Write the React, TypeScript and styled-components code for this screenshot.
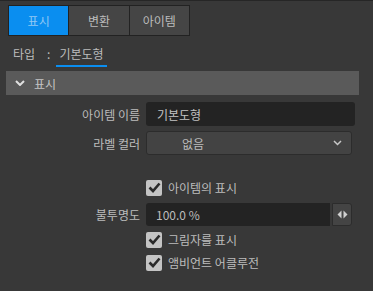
import React from "react";
import styled, { createGlobalStyle } from "styled-components";

const Global = createGlobalStyle`
  html, body { margin: 0; padding: 0; background: #383838; }
  body { font-family: "Noto Sans CJK KR", "Noto Sans", sans-serif; color: #bcbcbc; }
  * { box-sizing: border-box; }
`;

const Panel = styled.div`
  width: 373px;
  height: 291px;
  background: #383838;
  border-top: 1px solid #262626;
  padding: 4px 0 0 8px;
  overflow: hidden;
`;

const Tabs = styled.div`
  display: flex;
  width: 182px;
  height: 31px;
  border: 1px solid #222;
  background: #222;
  gap: 1px;
`;

const Tab = styled.div<{ $active?: boolean }>`
  flex: 1;
  display: flex;
  align-items: center;
  justify-content: center;
  font-size: 12px;
  background: ${(p) => (p.$active ? "#0a8ef0" : "#454545")};
  color: ${(p) => (p.$active ? "#90c8f4" : "#bcbcbc")};
`;

const TypeRow = styled.div`
  display: flex;
  align-items: center;
  height: 30px;
  padding-left: 5px;
  font-size: 12px;
  padding-top: 4px;
`;

const Colon = styled.span`
  margin: 0 6px 0 12px;
`;

const TypeValue = styled.span`
  position: relative;
  padding: 0 3px;
  &::after {
    content: "";
    position: absolute;
    left: 0;
    right: 0;
    bottom: -5px;
    height: 2px;
    background: #0a8ef0;
  }
`;

const SectionHeader = styled.div`
  margin: 5px 0 0 -2px;
  width: 353px;
  height: 24px;
  background: #5a5a5a;
  display: flex;
  align-items: center;
  padding-left: 9px;
  gap: 9px;
  font-size: 12px;
  color: #c4c4c4;
`;

const Rows = styled.div`
  display: flex;
  flex-direction: column;
  padding-top: 7px;
`;

const Row = styled.div<{ $mt?: number }>`
  display: grid;
  grid-template-columns: 132px 1fr;
  column-gap: 6px;
  align-items: center;
  margin-top: ${(p) => p.$mt ?? 0}px;
  font-size: 12px;
`;

const Label = styled.div`
  text-align: right;
`;

const TextInput = styled.div`
  width: 209px;
  height: 24px;
  background: #232323;
  border-radius: 3px;
  display: flex;
  align-items: center;
  padding-left: 11px;
  color: #c4c4c4;
`;

const Select = styled.div`
  width: 206px;
  height: 24px;
  background: #434343;
  border: 1px solid #2c2c2c;
  border-radius: 3px;
  display: flex;
  align-items: center;
  justify-content: space-between;
  padding: 0 9px 0 35px;
`;

const NumberWrap = styled.div`
  display: flex;
  gap: 2px;
  height: 23px;
`;

const NumberInput = styled.div`
  width: 184px;
  background: #232323;
  border-radius: 3px 0 0 3px;
  display: flex;
  align-items: center;
  padding-left: 10px;
  font-size: 12px;
`;

const Spinner = styled.div`
  width: 20px;
  background: #444;
  border: 1px solid #2c2c2c;
  border-radius: 0 3px 3px 0;
  display: flex;
  align-items: center;
  justify-content: center;
`;

const CheckRow = styled.label`
  display: flex;
  align-items: center;
  gap: 6px;
  font-size: 12px;
`;

const Box = styled.span`
  width: 16px;
  height: 16px;
  border-radius: 2px;
  background: #c4c4c4;
  display: flex;
  align-items: center;
  justify-content: center;
`;

const Check = () => (
  <Box>
    <svg width="13" height="11" viewBox="0 0 13 11">
      <path d="M1.5 5.5 L5 9 L11.5 1.5" fill="none" stroke="#2a2a2a" strokeWidth="2.6" />
    </svg>
  </Box>
);

const Chevron = ({ color, size = 10 }: { color: string; size?: number }) => (
  <svg width={size} height={size * 0.6} viewBox="0 0 10 6">
    <path d="M1 1 L5 5 L9 1" fill="none" stroke={color} strokeWidth="2" />
  </svg>
);

export default function App() {
  return (
    <>
      <Global />
      <Panel>
        <Tabs>
          <Tab $active>표시</Tab>
          <Tab>변환</Tab>
          <Tab>아이템</Tab>
        </Tabs>
        <TypeRow>
          <span>타입</span>
          <Colon>:</Colon>
          <TypeValue>기본도형</TypeValue>
        </TypeRow>
        <SectionHeader>
          <Chevron color="#e0e0e0" />
          <span>표시</span>
        </SectionHeader>
        <Rows>
          <Row>
            <Label>아이템 이름</Label>
            <TextInput>기본도형</TextInput>
          </Row>
          <Row $mt={5}>
            <Label>라벨 컬러</Label>
            <Select>
              <span>없음</span>
              <svg width="9" height="6" viewBox="0 0 9 6">
                <path d="M1 1 L4.5 4.5 L8 1" fill="none" stroke="#c8c8c8" strokeWidth="1.5" />
              </svg>
            </Select>
          </Row>
          <Row $mt={24}>
            <span />
            <CheckRow>
              <Check />
              아이템의 표시
            </CheckRow>
          </Row>
          <Row $mt={7}>
            <Label>불투명도</Label>
            <NumberWrap>
              <NumberInput>100.0 %</NumberInput>
              <Spinner>
                <svg width="11" height="9" viewBox="0 0 11 9">
                  <path d="M4.5 0.5 L0.5 4.5 L4.5 8.5 Z" fill="#d0d0d0" />
                  <path d="M6.5 0.5 L10.5 4.5 L6.5 8.5 Z" fill="#d0d0d0" />
                </svg>
              </Spinner>
            </NumberWrap>
          </Row>
          <Row $mt={5}>
            <span />
            <CheckRow>
              <Check />
              그림자를 표시
            </CheckRow>
          </Row>
          <Row $mt={6}>
            <span />
            <CheckRow>
              <Check />
              앰비언트 어클루전
            </CheckRow>
          </Row>
        </Rows>
      </Panel>
    </>
  );
}
